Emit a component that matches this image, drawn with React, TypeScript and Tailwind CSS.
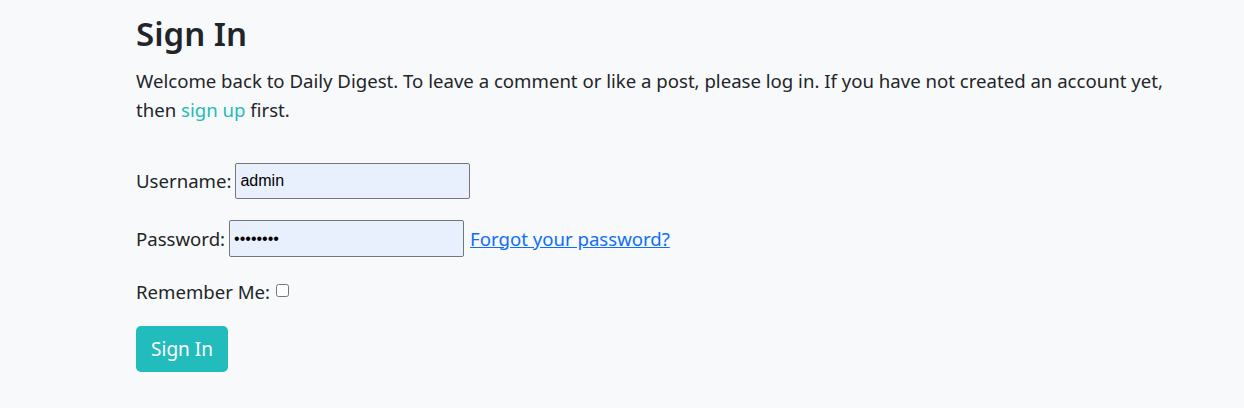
import React from 'react';

export default function App() {
  return (
    <div
      className="min-h-[408px] bg-[#f8f9fa] text-[#212529] pl-[136px] pt-[12px]"
      style={{ fontFamily: '"Noto Sans", "Open Sans", sans-serif' }}
    >
      <h1 className="text-[33px] font-semibold leading-[44px] mb-[10px]">Sign In</h1>
      <p className="text-[18.6px] leading-[29px] mb-[39px] w-[1060px]">
        Welcome back to Daily Digest. To leave a comment or like a post, please log in. If you have not
        created an account yet, then{' '}
        <a href="#" className="text-[#22bcbc] no-underline">
          sign up
        </a>{' '}
        first.
      </p>

      <form className="flex flex-col text-[18.6px]" onSubmit={(e) => e.preventDefault()}>
        <div className="flex items-center h-[36px] mb-[21px]">
          <label className="mr-[4px]">Username:</label>
          <input
            type="text"
            defaultValue="admin"
            className="w-[235px] h-[36px] bg-[#e8f0fe] border border-[#767676] rounded-[2px] px-[4px] text-[16px] text-black outline-none"
            style={{ fontFamily: '"Liberation Sans", Arial, sans-serif' }}
          />
        </div>
        <div className="flex items-center h-[37px] mb-[21px]">
          <label className="mr-[4px]">Password:</label>
          <input
            type="password"
            defaultValue="password"
            className="w-[235px] h-[37px] bg-[#e8f0fe] border border-[#767676] rounded-[2px] px-[4px] text-[16px] text-black outline-none"
            style={{ fontFamily: '"Liberation Sans", Arial, sans-serif' }}
          />
          <a href="#" className="ml-[6px] text-[#0d6efd] underline">
            Forgot your password?
          </a>
        </div>
        <div className="flex items-center h-[28px] mb-[20px]">
          <label className="mr-[6px]">Remember Me:</label>
          <input type="checkbox" className="w-[13px] h-[13px] -mt-[4px]" />
        </div>
        <div>
          <button
            type="submit"
            className="bg-[#22bcbc] text-white text-[19px] rounded-[5px] w-[92px] h-[46px]"
          >
            Sign In
          </button>
        </div>
      </form>
    </div>
  );
}
